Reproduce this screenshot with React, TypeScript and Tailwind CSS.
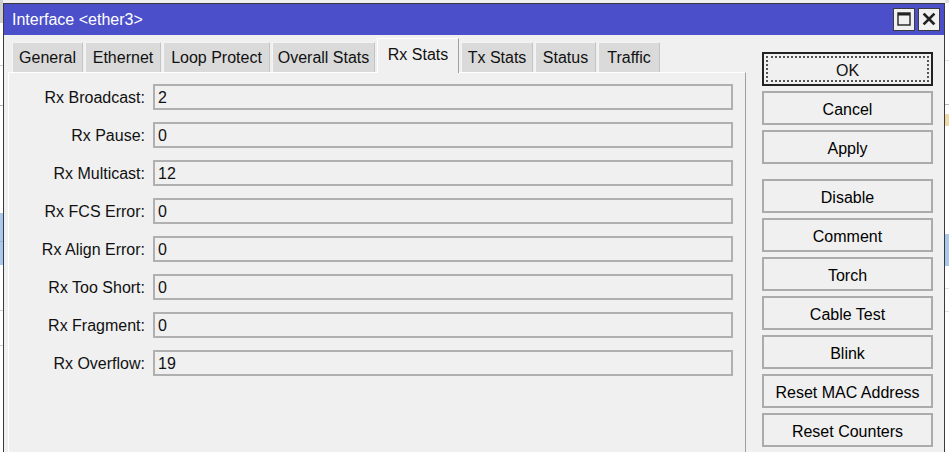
import React from "react";

const tabs = [
  { label: "General", w: "w-[71px]" },
  { label: "Ethernet", w: "w-[76px]" },
  { label: "Loop Protect", w: "w-[107px]" },
  { label: "Overall Stats", w: "w-[103px]" },
  { label: "Rx Stats", w: "w-[82px]", active: true },
  { label: "Tx Stats", w: "w-[72px]" },
  { label: "Status", w: "w-[61px]" },
  { label: "Traffic", w: "w-[62px]" },
];

const fields = [
  ["Rx Broadcast:", "2"],
  ["Rx Pause:", "0"],
  ["Rx Multicast:", "12"],
  ["Rx FCS Error:", "0"],
  ["Rx Align Error:", "0"],
  ["Rx Too Short:", "0"],
  ["Rx Fragment:", "0"],
  ["Rx Overflow:", "19"],
];

const buttonsA = ["Cancel", "Apply"];
const buttonsB = ["Disable", "Comment", "Torch", "Cable Test", "Blink", "Reset MAC Address", "Reset Counters"];

function Btn({ label }: { label: string }) {
  return (
    <div className="h-[34px] w-[171px] border-2 border-[#ababab] bg-[#f0f0f0] flex items-center justify-center pt-[3px] text-black">
      {label}
    </div>
  );
}

export default function App() {
  return (
    <div className="w-[949px] h-[452px] overflow-hidden flex bg-[#f0f0f0] text-[16px] leading-none text-[#111] font-['Liberation_Sans',Arial,sans-serif]">
      {/* background app, left strip */}
      <div className="w-[3px] h-full flex flex-col bg-white">
        <div className="h-[23px] bg-[#cfcfcf]" />
        <div className="h-[42px]" />
        <div className="h-px bg-[#d0d0d0]" />
        <div className="h-[39px]" />
        <div className="h-px bg-[#b8b8b8]" />
        <div className="h-[107px]" />
        <div className="h-[28px] bg-[#a9c8ec]" />
        <div className="h-px bg-[#8fb4e0]" />
        <div className="h-[23px] bg-[#a9c8ec]" />
        <div className="h-[45px]" />
        <div className="h-px bg-[#d0d0d0]" />
        <div className="h-[34px]" />
        <div className="h-px bg-[#d0d0d0]" />
        <div className="flex-1" />
      </div>

      {/* window */}
      <div className="w-[942px] h-[470px] mt-[3px] border border-[#3a3a3a] flex flex-col bg-[#f0f0f0]">
        {/* title bar */}
        <div className="h-[31px] bg-[#4b4fca] flex items-center pl-[8px] pr-[4px]">
          <span className="text-white pt-[1px]">Interface &lt;ether3&gt;</span>
          <div className="ml-auto flex gap-[3px] mt-[-1px]">
            <div className="w-[22px] h-[23px] bg-[#f0f0f0] border border-[#3c3c3c] flex items-center justify-center">
              <svg width="14" height="14" viewBox="0 0 14 14">
                <rect x="1" y="1" width="12" height="12" fill="none" stroke="#222" strokeWidth="1.4" />
                <rect x="1" y="1" width="12" height="2.5" fill="#222" />
              </svg>
            </div>
            <div className="w-[22px] h-[23px] bg-[#f0f0f0] border border-[#3c3c3c] flex items-center justify-center">
              <svg width="14" height="14" viewBox="0 0 14 14">
                <path d="M2.5 2.5 L11.5 11.5 M11.5 2.5 L2.5 11.5" stroke="#222" strokeWidth="2.6" strokeLinecap="square" />
              </svg>
            </div>
          </div>
        </div>

        {/* body */}
        <div className="flex flex-1">
          {/* tab control */}
          <div className="ml-[4px] w-[738px] flex flex-col pt-[3px]">
            <div className="h-[34px] flex items-end pl-[4px] gap-[2px] relative z-10">
              {tabs.map((t) =>
                t.active ? (
                  <div
                    key={t.label}
                    className={`${t.w} h-[35px] -mb-px bg-[#f0f0f0] border-t border-l border-white border-r border-r-[#a0a0a0] flex items-center justify-center pb-[2px]`}
                  >
                    {t.label}
                  </div>
                ) : (
                  <div
                    key={t.label}
                    className={`${t.w} h-[30px] bg-[#dadada] border-t border-l border-[#f4f4f4] border-r border-r-[#c4c4c4] flex items-center justify-center pt-[1px]`}
                  >
                    {t.label}
                  </div>
                )
              )}
            </div>
            <div className="flex-1 border-t border-l border-white border-r border-r-[#a0a0a0] pt-[11px] flex flex-col gap-[12px]">
              {fields.map(([label, value]) => (
                <div key={label} className="flex items-center h-[26px]">
                  <div className="w-[136px] text-right pt-[2px]">{label}</div>
                  <div className="ml-[8px] w-[580px] h-[26px] border-2 border-[#b0b0b0] bg-[#f0f0f0] flex items-center pl-[3px] pt-[2px]">
                    {value}
                  </div>
                </div>
              ))}
            </div>
          </div>

          {/* buttons */}
          <div className="ml-[16px] pt-[17px] flex flex-col">
            <div className="h-[34px] w-[171px] border-2 border-[#222] bg-[#f0f0f0] flex items-center justify-center relative pt-[3px]">
              <div className="absolute inset-[2px] border-2 border-dotted border-[#555]" />
              <span className="relative">OK</span>
            </div>
            <div className="flex flex-col gap-[5px] mt-[5px]">
              {buttonsA.map((b) => (
                <Btn key={b} label={b} />
              ))}
            </div>
            <div className="flex flex-col gap-[5px] mt-[15px]">
              {buttonsB.map((b) => (
                <Btn key={b} label={b} />
              ))}
            </div>
          </div>
        </div>
      </div>

      {/* background app, right strip */}
      <div className="w-[4px] h-full flex flex-col bg-white">
        <div className="h-[3px] bg-[#e0e0e0]" />
        <div className="h-[57px]" />
        <div className="h-px bg-[#e0e0e0]" />
        <div className="h-[43px]" />
        <div className="h-px bg-[#b8b8b8]" />
        <div className="h-[9px]" />
        <div className="h-[12px] bg-[#f4d9a8]" />
        <div className="h-[108px]" />
        <div className="h-[32px] bg-[#a9c8ec]" />
        <div className="h-[22px]" />
        <div className="h-px bg-[#e0e0e0]" />
        <div className="h-[22px]" />
        <div className="h-px bg-[#e0e0e0]" />
        <div className="flex-1" />
      </div>
    </div>
  );
}
